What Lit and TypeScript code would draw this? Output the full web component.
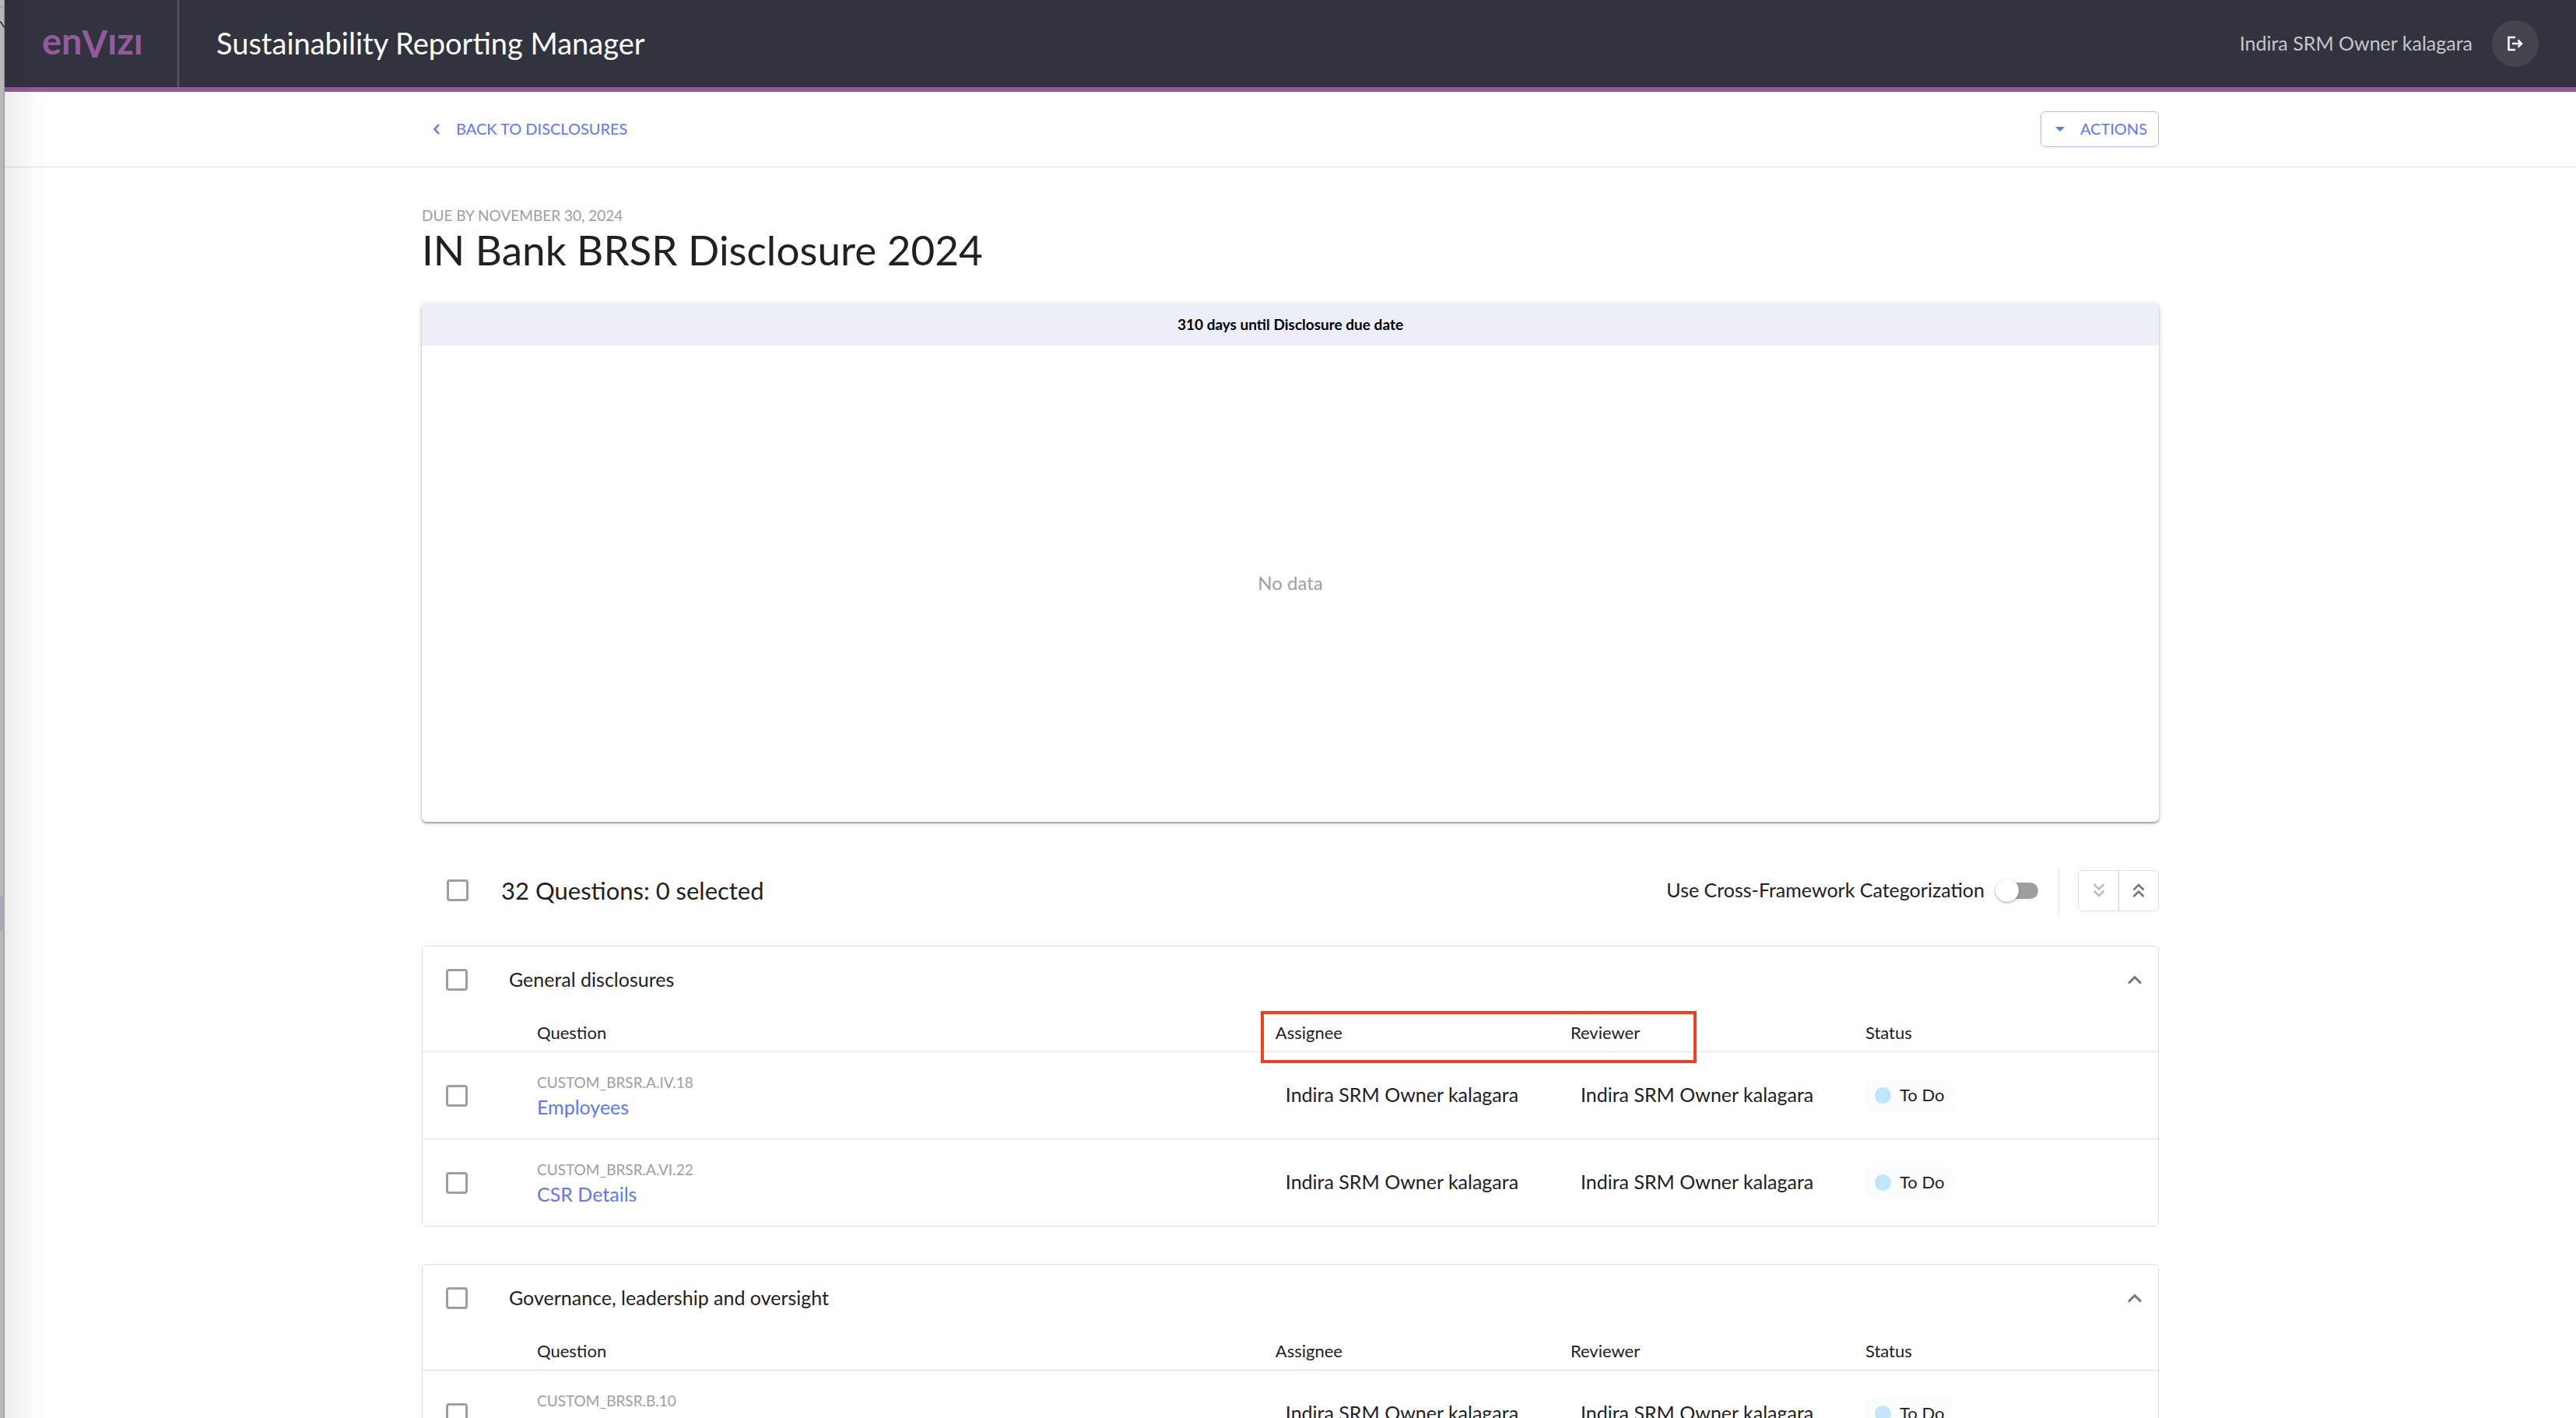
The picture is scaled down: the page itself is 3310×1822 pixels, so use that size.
import { LitElement, html, css, svg, nothing } from "lit";
import { customElement, property, state } from "lit/decorators.js";

interface Question {
  code: string;
  name: string;
  assignee: string;
  reviewer: string;
  status: string;
}

interface QuestionGroup {
  title: string;
  highlighted: boolean;
  questions: Question[];
}

const OWNER = "Indira SRM Owner kalagara";

const question = (code: string, name: string): Question => ({
  code,
  name,
  assignee: OWNER,
  reviewer: OWNER,
  status: "To Do",
});

const GROUPS: QuestionGroup[] = [
  {
    title: "General disclosures",
    highlighted: true,
    questions: [
      question("CUSTOM_BRSR.A.IV.18", "Employees"),
      question("CUSTOM_BRSR.A.VI.22", "CSR Details"),
    ],
  },
  {
    title: "Governance, leadership and oversight",
    highlighted: false,
    questions: [question("CUSTOM_BRSR.B.10", "Governance")],
  },
];

const shared = css`
  *,
  *::before,
  *::after {
    box-sizing: border-box;
  }
  button {
    font: inherit;
    margin: 0;
    padding: 0;
    background: none;
    border: 0;
    cursor: pointer;
  }
  a {
    color: var(--link);
    text-decoration: none;
  }
  svg {
    display: block;
    fill: none;
    stroke: currentColor;
  }
  .check {
    appearance: none;
    display: block;
    flex: none;
    width: 28px;
    height: 28px;
    margin: 0;
    border: 3px solid #9e9e9e;
    border-radius: 4px;
  }
  .check:checked {
    background: var(--link);
    border-color: var(--link);
  }
  .label {
    padding-bottom: 3px;
  }
`;

@customElement("question-group")
export class QuestionGroupCard extends LitElement {
  @property({ attribute: false }) group!: QuestionGroup;
  @property({ type: Boolean }) open = true;

  static styles = [
    shared,
    css`
      :host {
        display: block;
        border: 1px solid var(--line);
        border-radius: 6px;
      }
      .summary {
        display: flex;
        align-items: center;
        height: 86px;
        padding: 0 12px 0 30px;
      }
      .title {
        flex: 1;
        margin: 0 0 0 53px;
        font-size: var(--text-m);
        font-weight: 400;
      }
      .toggle {
        padding: 8px;
        color: #757575;
      }
      .table {
        width: 100%;
        table-layout: fixed;
        border-collapse: separate;
        border-spacing: 0;
      }
      .select {
        width: 147px;
      }
      .person {
        width: 17%;
      }
      .state {
        width: 376px;
      }
      .table th {
        height: 50px;
        padding: 0;
        border-bottom: 1px solid var(--line);
        font-size: var(--text-s);
        font-weight: 400;
        text-align: left;
      }
      .table td {
        height: 112px;
        padding: 0;
        border-bottom: 1px solid var(--line);
        font-size: var(--text-m);
      }
      .table tr:last-child td {
        height: 111px;
        border-bottom: 0;
      }
      .table td.pick {
        padding-left: 30px;
      }
      .table td.who {
        padding: 0 0 3px 13px;
      }
      .code {
        display: block;
        color: var(--muted);
        font-size: var(--text-xs);
        line-height: 28px;
      }
      .name {
        display: block;
        line-height: 34px;
      }
      .chip {
        display: inline-flex;
        align-items: center;
        gap: 11px;
        height: 39px;
        padding: 0 12px;
        border-radius: 4px;
        background: #fbfcfe;
        font-size: var(--text-s);
        vertical-align: middle;
      }
      .dot {
        width: 21px;
        height: 21px;
        border-radius: 50%;
        background: #c2e5fb;
      }
      .marked {
        position: relative;
      }
      .marked::after {
        content: "";
        position: absolute;
        left: -19px;
        top: -3px;
        width: 560px;
        height: 67px;
        border: 4px solid #ed4025;
        pointer-events: none;
      }
    `,
  ];

  private row(q: Question) {
    return html`<tr>
      <td class="pick"><input class="check" type="checkbox" aria-label="Select ${q.name}" /></td>
      <td>
        <span class="code">${q.code}</span>
        <a class="name" href="#${q.code}">${q.name}</a>
      </td>
      <td class="who">${q.assignee}</td>
      <td class="who">${q.reviewer}</td>
      <td><span class="chip"><span class="dot"></span><span class="label">${q.status}</span></span></td>
    </tr>`;
  }

  render() {
    const { title, questions, highlighted } = this.group;
    return html`
      <div class="summary">
        <input class="check" type="checkbox" aria-label="Select ${title}" />
        <h2 class="title label">${title}</h2>
        <button
          class="toggle"
          aria-label="Toggle ${title}"
          aria-expanded=${this.open}
          @click=${() => (this.open = !this.open)}
        >
          <svg width="20" height="14" viewBox="0 0 20 14" stroke-width="3">
            ${this.open
              ? svg`<path d="M2 11.5 10 3.500 18 11.5" />`
              : svg`<path d="M2 2.500 10 10.500 18 2.500" />`}
          </svg>
        </button>
      </div>
      ${this.open
        ? html`<table class="table">
            <thead>
              <tr>
                <th class="select"></th>
                <th>Question</th>
                <th class="person ${highlighted ? "marked" : ""}">Assignee</th>
                <th class="person">Reviewer</th>
                <th class="state">Status</th>
              </tr>
            </thead>
            <tbody>
              ${questions.map((q) => this.row(q))}
            </tbody>
          </table>`
        : nothing}
    `;
  }
}

@customElement("app-root")
export class AppRoot extends LitElement {
  @state() private crossFramework = false;

  static styles = [
    shared,
    css`
      :host {
        --link: #5c78f5;
        --line: #dedede;
        --muted: #9e9e9e;
        --text-xs: 19px;
        --text-s: 22px;
        --text-m: 25px;
        display: grid;
        grid-template-columns: 6px minmax(0, 1fr);
        height: 100vh;
        overflow: hidden;
        background: #fff;
        color: #212121;
        font-family: Lato, "Open Sans", sans-serif;
        font-size: var(--text-m);
      }
      .edge {
        background:
          linear-gradient(#a9aab8, #a9aab8) 0 1152px / 6px 44px no-repeat,
          linear-gradient(to bottom left, transparent 42%, #333 43% 57%, transparent 58%) 0 27px / 6px 9px no-repeat,
          linear-gradient(#a2a2a2, #a2a2a2) 0 8px / 6px 2px no-repeat,
          linear-gradient(to right, #b9b9b9 4px, #8f8f8f);
      }
      .sheet {
        position: relative;
        min-width: 0;
      }
      .sheet::after {
        content: "";
        position: absolute;
        inset: 0 auto 0 0;
        width: 60px;
        background: linear-gradient(
          to right,
          rgba(0, 0, 0, 0.07),
          rgba(0, 0, 0, 0.045) 35%,
          rgba(0, 0, 0, 0.01) 65%,
          transparent
        );
        pointer-events: none;
      }
      .header {
        display: flex;
        align-items: center;
        height: 118px;
        padding-right: 48px;
        border-bottom: 6px solid #955a9e;
        background: #31333f;
        color: #fff;
      }
      .brand {
        display: flex;
        align-items: center;
        align-self: stretch;
        width: 224px;
        padding: 0 0 4px 48px;
        border-right: 2px solid #5a5b66;
        color: #955a9e;
        font-size: 47px;
        font-weight: 700;
        line-height: 60px;
      }
      .peak {
        vertical-align: -4px;
      }
      .product {
        flex: 1;
        padding-left: 48px;
        font-size: 38px;
      }
      .user {
        color: #c6c6ca;
      }
      .logout {
        display: grid;
        place-items: center;
        width: 60px;
        height: 60px;
        margin-left: 25px;
        border-radius: 50%;
        background: #44434e;
        color: #fff;
      }
      .toolbar {
        border-bottom: 1px solid var(--line);
      }
      .wrap {
        width: calc(100% - 96px);
        max-width: 2232px;
        margin: 0 auto;
      }
      .tools {
        display: flex;
        align-items: center;
        justify-content: space-between;
        height: 96px;
        font-size: 20px;
      }
      .back {
        display: flex;
        align-items: center;
        gap: 20px;
        padding-left: 14px;
      }
      .actions {
        display: flex;
        align-items: center;
        gap: 20px;
        height: 46px;
        padding: 0 14px 0 18px;
        border: 1px solid #aebcfa;
        border-radius: 6px;
        color: var(--link);
      }
      .due {
        margin: 50px 0 0;
        color: var(--muted);
        font-size: var(--text-xs);
        line-height: 24px;
      }
      .heading {
        margin: 0;
        font-size: 53px;
        font-weight: 400;
        line-height: 64px;
      }
      .progress {
        margin-top: 37px;
        border-radius: 6px;
        overflow: hidden;
        box-shadow: 0 2px 2px rgba(0, 0, 0, 0.28), 0 1px 6px rgba(0, 0, 0, 0.2);
      }
      .countdown {
        margin: 0;
        background: #eceff7;
        color: #000;
        font-size: var(--text-xs);
        font-weight: 700;
        line-height: 54px;
        text-align: center;
      }
      .empty {
        display: grid;
        place-items: center;
        height: 612px;
        color: var(--muted);
        font-size: 24px;
      }
      .bulk {
        display: flex;
        align-items: center;
        height: 60px;
        margin: 58px 0 41px;
        padding-left: 32px;
      }
      .count {
        flex: 1;
        padding-left: 42px;
        font-size: 31px;
      }
      .cross {
        display: flex;
        align-items: center;
        gap: 14px;
      }
      .switch {
        appearance: none;
        display: flex;
        align-items: center;
        width: 55px;
        height: 21px;
        margin: 0;
        border-radius: 11px;
        background: linear-gradient(to right, transparent 14px, #9e9e9e 14px);
      }
      .switch::before {
        content: "";
        width: 30px;
        height: 30px;
        border-radius: 50%;
        background: #fff;
        box-shadow: 0 1px 3px rgba(0, 0, 0, 0.4);
      }
      .switch:checked::before {
        margin-left: auto;
      }
      .rule {
        width: 1px;
        height: 57px;
        margin: 0 24px 0 26px;
        background: var(--line);
      }
      .expanders {
        display: flex;
        height: 53px;
        border: 1px solid var(--line);
        border-radius: 6px;
      }
      .expander {
        display: grid;
        place-items: center;
        width: 51px;
        color: #757575;
      }
      .expander:disabled {
        color: #bdbdbd;
      }
      .expander + .expander {
        border-left: 1px solid #cfcfcf;
      }
      .groups {
        display: grid;
        gap: 48px;
      }
    `,
  ];

  render() {
    return html`
      <div class="edge"></div>
      <div class="sheet">
        <header class="header">
          <div class="brand"><span>en<span class="peak">V</span>ızı</span></div>
          <div class="product label">Sustainability Reporting Manager</div>
          <span class="user label">${OWNER}</span>
          <button class="logout" aria-label="Log out">
            <svg width="22" height="20" viewBox="0 0 22 20" stroke-width="2.500">
              <path d="M11 2H2.500V18H11M7 10H19M14.500 5.500 19 10 14.500 14.500" />
            </svg>
          </button>
        </header>

        <nav class="toolbar">
          <div class="wrap tools">
            <a class="back" href="#disclosures">
              <svg width="10" height="14" viewBox="0 0 10 14" stroke-width="2.500">
                <path d="M8 1 2.500 7 8 13" />
              </svg>
              <span class="label">BACK TO DISCLOSURES</span>
            </a>
            <button class="actions">
              <svg width="12" height="6" viewBox="0 0 12 6">
                <path d="M0 0H12L6 6Z" fill="currentColor" stroke="none" />
              </svg>
              <span class="label">ACTIONS</span>
            </button>
          </div>
        </nav>

        <main class="wrap">
          <p class="due">DUE BY NOVEMBER 30, 2024</p>
          <h1 class="heading">IN Bank BRSR Disclosure 2024</h1>

          <section class="progress">
            <p class="countdown">310 days until Disclosure due date</p>
            <div class="empty"><span class="label">No data</span></div>
          </section>

          <div class="bulk">
            <input class="check" id="all" type="checkbox" />
            <label class="count" for="all">32 Questions: 0 selected</label>
            <label class="cross">
              <span class="label">Use Cross-Framework Categorization</span>
              <input
                class="switch"
                type="checkbox"
                role="switch"
                .checked=${this.crossFramework}
                @change=${() => (this.crossFramework = !this.crossFramework)}
              />
            </label>
            <span class="rule"></span>
            <div class="expanders">
              <button class="expander" aria-label="Expand all" disabled>
                <svg width="16" height="20" viewBox="0 0 16 20" stroke-width="2.500">
                  <path d="M1.500 2 8 8.500 14.500 2M1.500 10.500 8 17 14.500 10.500" />
                </svg>
              </button>
              <button class="expander" aria-label="Collapse all">
                <svg width="16" height="20" viewBox="0 0 16 20" stroke-width="2.500">
                  <path d="M1.500 9.500 8 3 14.500 9.500M1.500 18 8 11.500 14.500 18" />
                </svg>
              </button>
            </div>
          </div>

          <div class="groups">
            ${GROUPS.map((g) => html`<question-group .group=${g}></question-group>`)}
          </div>
        </main>
      </div>
    `;
  }
}
